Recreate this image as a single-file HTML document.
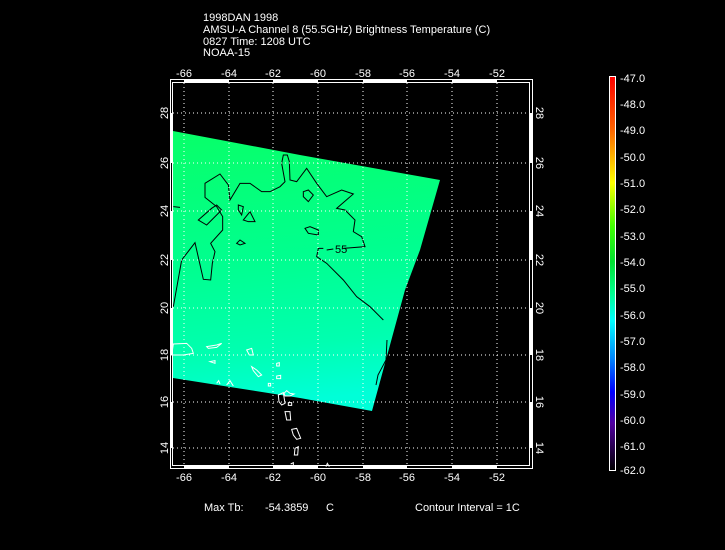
<!DOCTYPE html>
<html><head><style>
html,body{margin:0;padding:0;background:#000;}
svg{display:block}
text{font-family:"Liberation Sans",sans-serif;font-size:11px;fill:#fff}
</style></head><body>
<svg width="725" height="550" viewBox="0 0 725 550" xmlns="http://www.w3.org/2000/svg">
<defs>
<linearGradient id="dg" x1="0" y1="0" x2="0.1" y2="1">
<stop offset="0" stop-color="#08ff68"/>
<stop offset="0.5" stop-color="#00ff90"/>
<stop offset="0.8" stop-color="#00ffb0"/>
<stop offset="1" stop-color="#00ffd8"/>
</linearGradient>
<linearGradient id="cb" x1="0" y1="0" x2="0" y2="1">
<stop offset="0" stop-color="#ff0000"/>
<stop offset="0.13" stop-color="#ff6000"/>
<stop offset="0.27" stop-color="#ffff00"/>
<stop offset="0.38" stop-color="#40ff00"/>
<stop offset="0.47" stop-color="#00e030"/>
<stop offset="0.55" stop-color="#00ff90"/>
<stop offset="0.62" stop-color="#00ffff"/>
<stop offset="0.72" stop-color="#0080ff"/>
<stop offset="0.8" stop-color="#0000ff"/>
<stop offset="0.88" stop-color="#5000a0"/>
<stop offset="1" stop-color="#000000"/>
</linearGradient>
</defs>
<text x="203" y="21">1998DAN 1998</text>
<text x="203" y="33">AMSU-A Channel 8 (55.5GHz) Brightness Temperature (C)</text>
<text x="203" y="45">0827 Time: 1208 UTC</text>
<text x="203" y="56">NOAA-15</text>

<path d="M173,131 L300,155 L440,180 L420,250 L405,290 L390,345 L372,411 L300,398 L230,387 L173,378 Z" fill="url(#dg)"/>

<g transform="translate(170,120) scale(0.33333)" fill="none" stroke="#000" stroke-width="3">
<path d="M10,560 35,420 75,368 100,478 122,480 127,430 135,395 122,370 158,330 158,290 140,260 105,232 105,190 150,162 175,195 180,240 210,190 240,190 275,215 300,215 330,200 345,185 335,130 340,105 352,105 358,125 360,180 380,185 410,145 440,190 470,230 515,210 550,222 500,265 525,270 555,300 550,335 575,350 585,380 520,385 M490,387 470,390 M460,385 445,385 440,410 470,430 520,480 560,530 600,560 640,600"/>
<path d="M400,215 415,210 430,225 415,245 400,230Z"/>
<path d="M205,255 220,260 215,285 205,270Z"/>
<path d="M220,300 240,275 255,305 235,305Z"/>
<path d="M200,370 210,360 225,370 210,375Z"/>
<path d="M405,325 420,320 445,330 445,345 415,340Z"/>
<path d="M85,300 125,265 140,255 155,270 110,315Z"/>
<path d="M10,260 30,262"/>
</g>
<text x="335" y="253" style="fill:#000">55</text>
<path d="M387,340 L386,360 L378,375 L376,385" fill="none" stroke="#000"/>

<g transform="translate(150,340) scale(0.33333)" fill="none" stroke="#fff" stroke-width="3">
<path d="M65,45 70,12 110,10 125,25 130,40 100,45Z"/>
<path d="M170,20 200,15 215,10 200,22 175,25Z"/>
<path d="M290,30 305,25 310,45 298,45Z"/>
<path d="M180,65 195,62 195,70Z"/>
<path d="M305,80 320,90 335,105 325,110 310,92Z"/>
<path d="M380,70 388,68 388,78 380,78Z"/>
<path d="M380,108 392,106 392,116 380,116Z"/>
<path d="M355,130 362,130 362,138 355,138Z"/>
<path d="M385,165 400,158 405,190 395,195 387,185Z"/>
<path d="M402,160 410,152 420,160 432,162 420,168 405,168Z"/>
<path d="M415,188 425,188 425,196 415,196Z"/>
<path d="M405,215 420,215 422,240 410,240Z"/>
<path d="M425,268 440,265 452,295 440,298 430,285Z"/>
<path d="M435,325 445,320 443,345 433,345Z"/>
<path d="M422,372 430,368 430,380"/>
<path d="M528,380 532,370 538,380"/>
<path d="M200,130 206,122 210,132 M230,135 240,122 250,138"/>
</g>

<g stroke="#fff" stroke-width="1" stroke-dasharray="1,3" fill="none">
<path d="M184,83V466 M229,83V466 M273,83V466 M318,83V466 M363,83V466 M407,83V466 M452,83V466 M497,83V466"/>
<path d="M173,113H530 M173,163H530 M173,211H530 M173,260H530 M173,308H530 M173,355H530 M173,402H530 M173,448H530"/>
</g>

<rect x="170.5" y="79.5" width="362" height="389" fill="none" stroke="#fff"/>
<rect x="172.5" y="82.5" width="357" height="383" fill="none" stroke="#fff"/>
<g fill="#fff">
<rect x="184" y="80" width="45" height="3"/><rect x="273" y="80" width="45" height="3"/><rect x="363" y="80" width="44" height="3"/><rect x="452" y="80" width="45" height="3"/>
<rect x="184" y="466" width="45" height="3"/><rect x="273" y="466" width="45" height="3"/><rect x="363" y="466" width="44" height="3"/><rect x="452" y="466" width="45" height="3"/>
<rect x="171" y="113" width="2" height="50"/><rect x="171" y="211" width="2" height="49"/><rect x="171" y="308" width="2" height="47"/><rect x="171" y="402" width="2" height="46"/>
<rect x="530" y="113" width="3" height="50"/><rect x="530" y="211" width="3" height="49"/><rect x="530" y="308" width="3" height="47"/><rect x="530" y="402" width="3" height="46"/>
</g>

<g text-anchor="middle">
<text x="184" y="77">-66</text><text x="229" y="77">-64</text><text x="273" y="77">-62</text><text x="318" y="77">-60</text><text x="363" y="77">-58</text><text x="407" y="77">-56</text><text x="452" y="77">-54</text><text x="497" y="77">-52</text>
<text x="184" y="481">-66</text><text x="229" y="481">-64</text><text x="273" y="481">-62</text><text x="318" y="481">-60</text><text x="363" y="481">-58</text><text x="407" y="481">-56</text><text x="452" y="481">-54</text><text x="497" y="481">-52</text>
<text transform="translate(168,113) rotate(-90)">28</text><text transform="translate(168,163) rotate(-90)">26</text><text transform="translate(168,211) rotate(-90)">24</text><text transform="translate(168,260) rotate(-90)">22</text><text transform="translate(168,308) rotate(-90)">20</text><text transform="translate(168,355) rotate(-90)">18</text><text transform="translate(168,402) rotate(-90)">16</text><text transform="translate(168,448) rotate(-90)">14</text>
<text transform="translate(536,113) rotate(90)">28</text><text transform="translate(536,163) rotate(90)">26</text><text transform="translate(536,211) rotate(90)">24</text><text transform="translate(536,260) rotate(90)">22</text><text transform="translate(536,308) rotate(90)">20</text><text transform="translate(536,355) rotate(90)">18</text><text transform="translate(536,402) rotate(90)">16</text><text transform="translate(536,448) rotate(90)">14</text>
</g>

<rect x="609.5" y="76.5" width="6" height="394" fill="url(#cb)" stroke="#fff"/>
<g>
<text x="620" y="82">-47.0</text><text x="620" y="108">-48.0</text><text x="620" y="134">-49.0</text><text x="620" y="161">-50.0</text><text x="620" y="187">-51.0</text><text x="620" y="213">-52.0</text><text x="620" y="240">-53.0</text><text x="620" y="266">-54.0</text><text x="620" y="292">-55.0</text><text x="620" y="319">-56.0</text><text x="620" y="345">-57.0</text><text x="620" y="371">-58.0</text><text x="620" y="398">-59.0</text><text x="620" y="424">-60.0</text><text x="620" y="450">-61.0</text><text x="620" y="474">-62.0</text>
</g>

<text x="204" y="511">Max Tb:</text>
<text x="265" y="511">-54.3859</text>
<text x="326" y="511">C</text>
<text x="415" y="511">Contour Interval = 1C</text>
</svg>
</body></html>
